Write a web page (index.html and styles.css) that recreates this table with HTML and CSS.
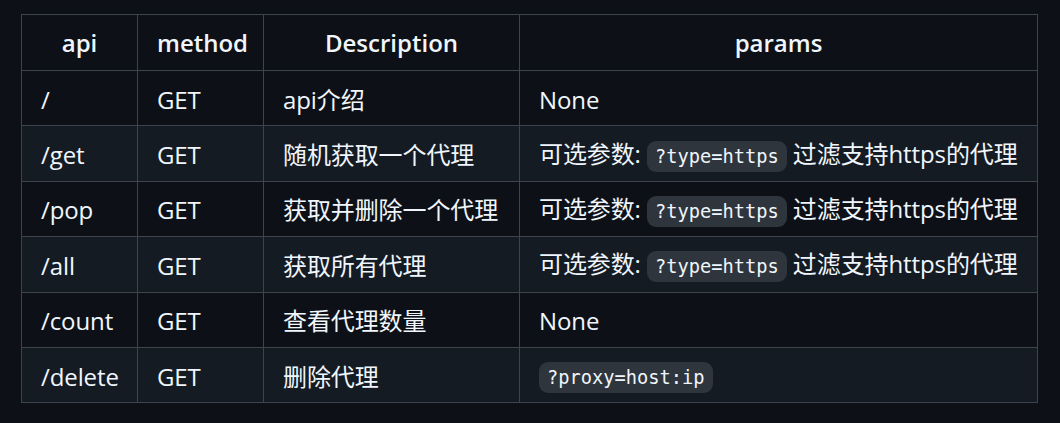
FILE: index.html
```html
<!DOCTYPE html>
<html lang="zh-CN">
<head>
<meta charset="utf-8">
<title>API</title>
<link rel="stylesheet" href="styles.css">
</head>
<body>
<table class="api-table">
  <colgroup>
    <col class="c-api"><col class="c-method"><col class="c-desc"><col class="c-params">
  </colgroup>
  <thead>
    <tr><th>api</th><th>method</th><th>Description</th><th>params</th></tr>
  </thead>
  <tbody>
    <tr><td>/</td><td>GET</td><td>api介绍</td><td>None</td></tr>
    <tr><td>/get</td><td>GET</td><td>随机获取一个代理</td><td>可选参数: <code>?type=https</code> 过滤支持https的代理</td></tr>
    <tr><td>/pop</td><td>GET</td><td>获取并删除一个代理</td><td>可选参数: <code>?type=https</code> 过滤支持https的代理</td></tr>
    <tr><td>/all</td><td>GET</td><td>获取所有代理</td><td>可选参数: <code>?type=https</code> 过滤支持https的代理</td></tr>
    <tr><td>/count</td><td>GET</td><td>查看代理数量</td><td>None</td></tr>
    <tr><td>/delete</td><td>GET</td><td>删除代理</td><td><code>?proxy=host:ip</code></td></tr>
  </tbody>
</table>
</body>
</html>
```
FILE: styles.css
```css
html, body {
  margin: 0;
  background: #0d1117;
}
body {
  padding: 14px 0 0 21px;
  font-family: "Open Sans", "Noto Sans CJK SC", sans-serif;
  font-size: 24px;
  color: #f0f6fc;
}
.api-table {
  border-collapse: collapse;
  table-layout: fixed;
  width: 1016px;
}
.c-api { width: 116px; }
.c-method { width: 126px; }
.c-desc { width: 256px; }
.c-params { width: 518px; }
.api-table th,
.api-table td {
  border: 1.5px solid #3d444d;
  padding: 3px 19px 0;
  height: 55.4px;
  box-sizing: border-box;
  line-height: 36px;
  white-space: nowrap;
}
.api-table th {
  font-weight: 600;
  text-align: center;
  height: 56px;
  padding-top: 0;
}
.api-table td {
  text-align: left;
  letter-spacing: -0.1px;
}
.api-table tbody tr:nth-child(even) {
  background: #151b23;
}
code {
  font-family: "DejaVu Sans Mono", monospace;
  font-size: 18.7px;
  letter-spacing: 0;
  background: #2f353d;
  border-radius: 9px;
  padding: 5px 8px;
}
```
